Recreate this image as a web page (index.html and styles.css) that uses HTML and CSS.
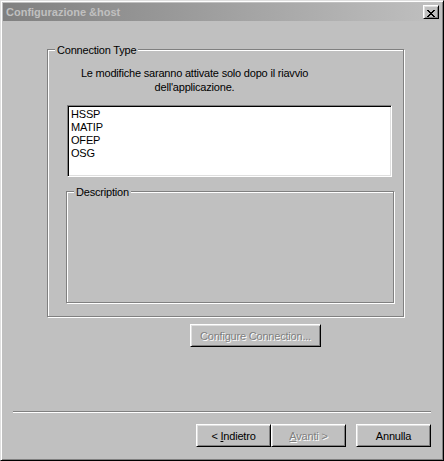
FILE: index.html
```html
<!DOCTYPE html>
<html>
<head>
<meta charset="utf-8">
<title>Configurazione &amp;host</title>
<link rel="stylesheet" href="styles.css">
</head>
<body>
<div class="window">
  <div class="titlebar">
    <span class="title">Configurazione &amp;host</span>
    <button class="close" type="button" aria-label="Chiudi">
      <svg width="8" height="7" viewBox="0 0 8 7" shape-rendering="crispEdges" aria-hidden="true">
        <path fill="#000" d="M0 0h2v1H0zM6 0h2v1H6zM1 1h2v1H1zM5 1h2v1H5zM2 2h4v1H2zM3 3h2v1H3zM2 4h4v1H2zM1 5h2v1H1zM5 5h2v1H5zM0 6h2v1H0zM6 6h2v1H6z"/>
      </svg>
    </button>
  </div>
  <div class="main">
    <div class="group group-outer">
      <div class="legend">Connection Type</div>
      <div class="note">Le modifiche saranno attivate solo dopo il riavvio<br>dell'applicazione.</div>
      <div class="listbox">
        <div class="item">HSSP</div>
        <div class="item">MATIP</div>
        <div class="item">OFEP</div>
        <div class="item">OSG</div>
      </div>
      <div class="group group-desc">
        <div class="legend">Description</div>
      </div>
    </div>
    <button class="btn btn-configure disabled" type="button" disabled>Configure Connection...</button>
    <div class="separator"></div>
    <div class="buttons">
      <button class="btn" type="button">&lt; <u>I</u>ndietro</button>
      <button class="btn disabled" type="button" disabled><u>A</u>vanti &gt;</button>
      <button class="btn btn-cancel" type="button">Annulla</button>
    </div>
  </div>
</div>
</body>
</html>
```
FILE: styles.css
```css
* {
  box-sizing: border-box;
}

html,
body {
  margin: 0;
  padding: 0;
}

body {
  width: 444px;
  height: 461px;
  background: #c0c0c0;
  font-family: "Liberation Sans", Arial, sans-serif;
  font-size: 11px;
  letter-spacing: -0.2px;
  color: #000;
}

.window {
  width: 444px;
  height: 461px;
  border: 1px solid;
  border-color: #dfdfdf #000 #000 #dfdfdf;
  box-shadow: inset 1px 1px 0 #fff, inset -1px -1px 0 #808080;
  padding: 2px;
  background: #c0c0c0;
  display: flex;
  flex-direction: column;
}

.titlebar {
  flex: none;
  height: 18px;
  display: flex;
  align-items: center;
  padding: 0 2px 0 3px;
  background: linear-gradient(to right, #808080, #c0c0c0);
}

.title {
  flex: 1;
  font-weight: bold;
  letter-spacing: 0;
  color: #c0c0c0;
  line-height: 18px;
  white-space: nowrap;
}

.close {
  appearance: none;
  width: 16px;
  height: 14px;
  margin: 0;
  padding: 3px 0 0 3px;
  border: 1px solid;
  border-color: #fff #000 #000 #fff;
  box-shadow: inset 1px 1px 0 #dfdfdf, inset -1px -1px 0 #808080;
  background: #c0c0c0;
  display: block;
}

.close svg {
  display: block;
}

.main {
  flex: 1;
  display: flex;
  flex-direction: column;
  align-items: flex-start;
}

.group {
  border: 1px solid #808080;
  box-shadow: 1px 1px 0 #fff, inset 1px 1px 0 #fff;
}

.group-outer {
  width: 357px;
  height: 268px;
  margin: 28px 0 0 44px;
}

.legend {
  display: table;
  margin: -6px 0 -7px 7px;
  padding: 0 2px;
  line-height: 13px;
  background: #c0c0c0;
}

.note {
  width: 269px;
  margin: 16px 0 0 12px;
  text-align: center;
  line-height: 14px;
}

.listbox {
  width: 325px;
  height: 72px;
  margin: 11px 0 0 19px;
  padding: 2px 0 0 3px;
  background: #fff;
  border: 1px solid;
  border-color: #808080 #fff #fff #808080;
  box-shadow: inset 1px 1px 0 #000, inset -1px -1px 0 #dfdfdf;
}

.item {
  line-height: 13px;
}

.group-desc {
  width: 328px;
  height: 112px;
  margin: 14px 0 0 18px;
}

.btn {
  appearance: none;
  width: 75px;
  height: 23px;
  margin: 0;
  padding: 0;
  font: inherit;
  letter-spacing: inherit;
  color: #000;
  text-align: center;
  background: #c0c0c0;
  border: 1px solid;
  border-color: #fff #000 #000 #fff;
  box-shadow: inset 1px 1px 0 #dfdfdf, inset -1px -1px 0 #808080;
  white-space: nowrap;
}

.btn u {
  text-decoration: underline;
  text-underline-offset: 1px;
}

.btn.disabled {
  color: #808080;
  text-shadow: 1px 1px 0 #fff;
}

.btn-configure {
  width: 131px;
  margin: 7px 0 0 187px;
}

.separator {
  width: 418px;
  height: 2px;
  margin: 64px 0 0 10px;
  border-top: 1px solid #808080;
  border-bottom: 1px solid #fff;
}

.buttons {
  display: flex;
  margin: 11px 0 0 193px;
}

.btn-cancel {
  margin-left: 10px;
}
```
